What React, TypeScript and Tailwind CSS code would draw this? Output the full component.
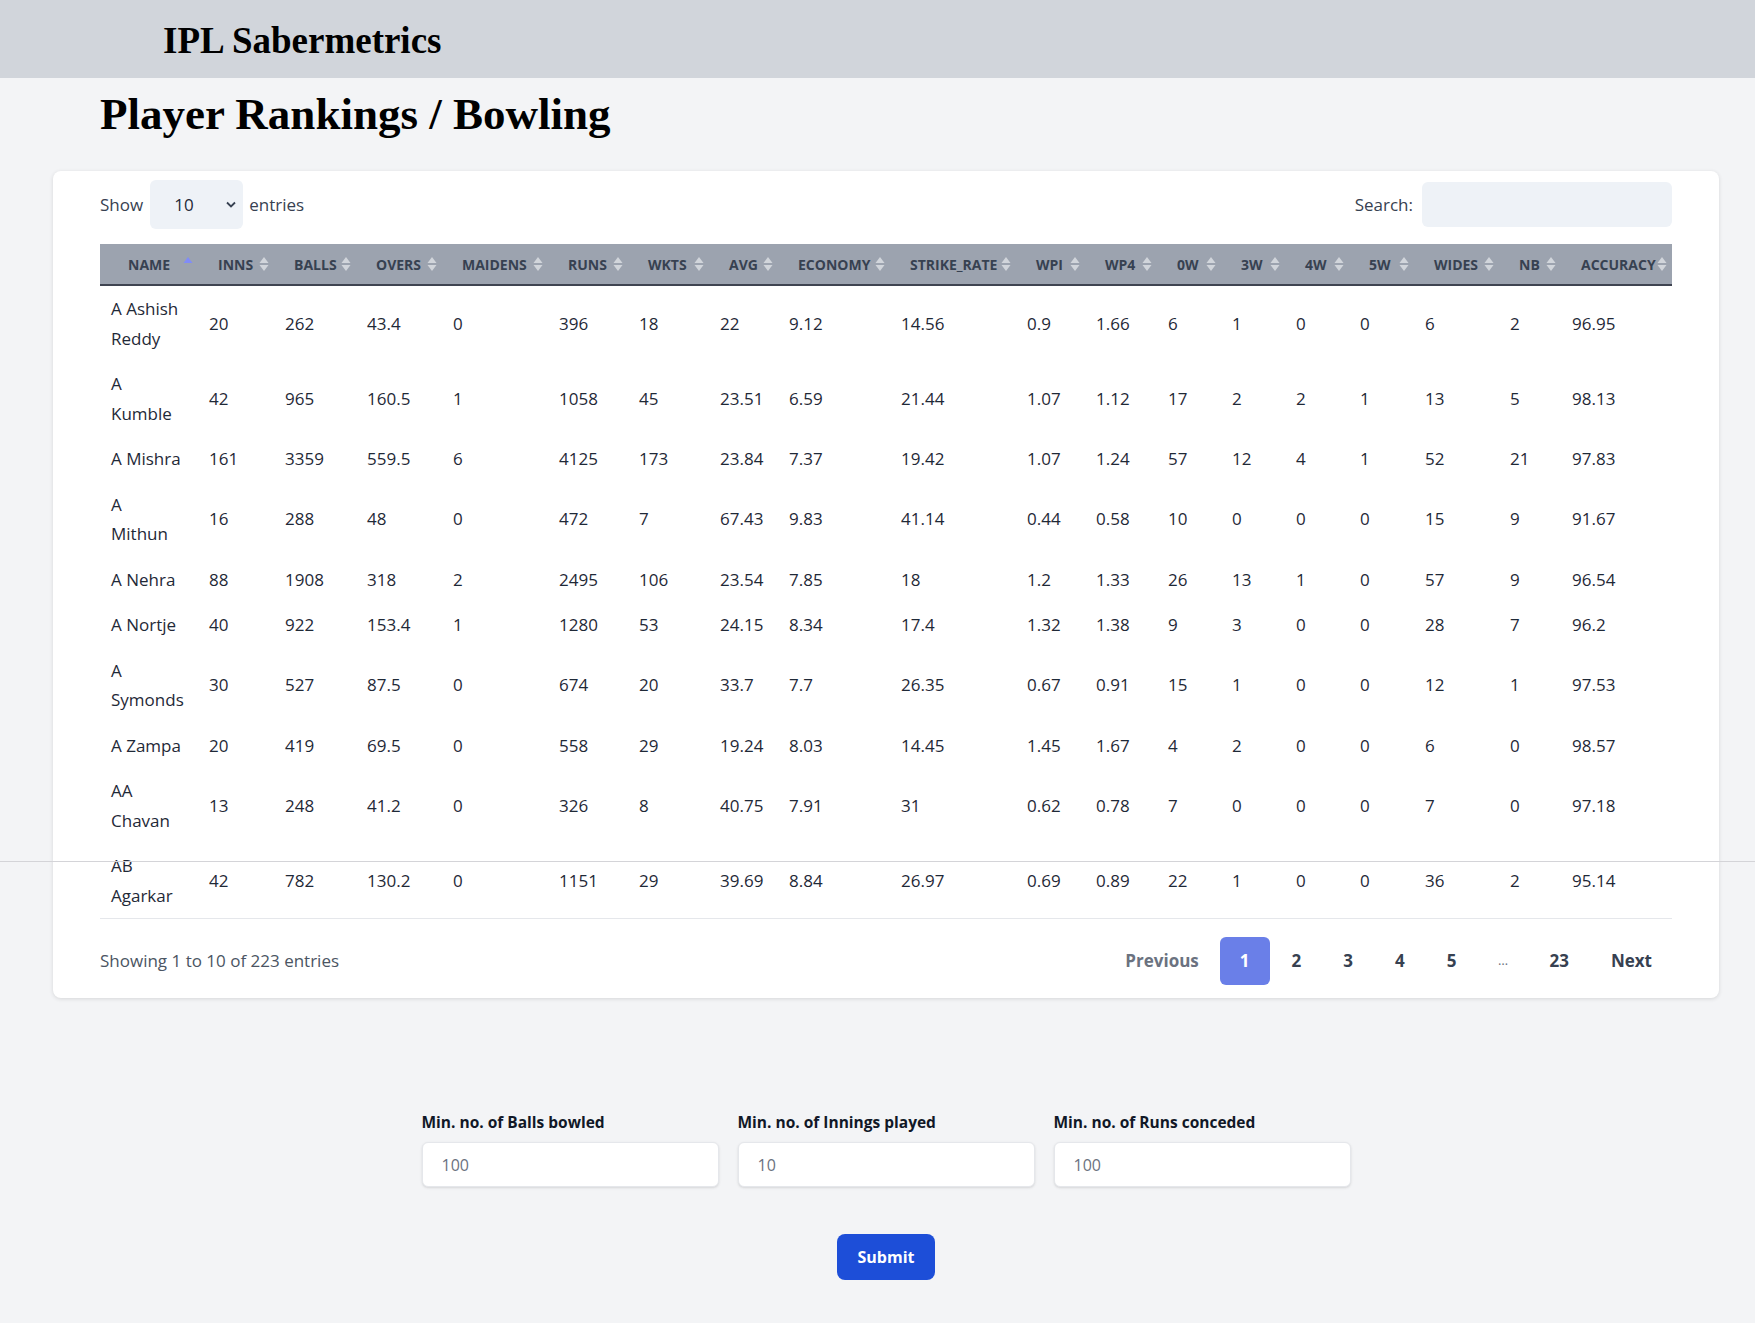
import React from 'react';

type Row = { name: string[]; stats: (string | number)[] };

const columns = [
  'NAME', 'INNS', 'BALLS', 'OVERS', 'MAIDENS', 'RUNS', 'WKTS', 'AVG', 'ECONOMY', 'STRIKE_RATE',
  'WPI', 'WP4', '0W', '3W', '4W', '5W', 'WIDES', 'NB', 'ACCURACY',
];

const colWidths = [
  'w-[98px]', 'w-[76px]', 'w-[82px]', 'w-[86px]', 'w-[106px]', 'w-[80px]', 'w-[81px]', 'w-[69px]',
  'w-[112px]', 'w-[126px]', 'w-[69px]', 'w-[72px]', 'w-[64px]', 'w-[64px]', 'w-[64px]', 'w-[65px]',
  'w-[85px]', 'w-[62px]', 'w-[111px]',
];

const rows: Row[] = [
  { name: ['A Ashish', 'Reddy'], stats: [20, 262, 43.4, 0, 396, 18, 22, 9.12, 14.56, 0.9, 1.66, 6, 1, 0, 0, 6, 2, 96.95] },
  { name: ['A', 'Kumble'], stats: [42, 965, 160.5, 1, 1058, 45, 23.51, 6.59, 21.44, 1.07, 1.12, 17, 2, 2, 1, 13, 5, 98.13] },
  { name: ['A Mishra'], stats: [161, 3359, 559.5, 6, 4125, 173, 23.84, 7.37, 19.42, 1.07, 1.24, 57, 12, 4, 1, 52, 21, 97.83] },
  { name: ['A', 'Mithun'], stats: [16, 288, 48, 0, 472, 7, 67.43, 9.83, 41.14, 0.44, 0.58, 10, 0, 0, 0, 15, 9, 91.67] },
  { name: ['A Nehra'], stats: [88, 1908, 318, 2, 2495, 106, 23.54, 7.85, 18, 1.2, 1.33, 26, 13, 1, 0, 57, 9, 96.54] },
  { name: ['A Nortje'], stats: [40, 922, 153.4, 1, 1280, 53, 24.15, 8.34, 17.4, 1.32, 1.38, 9, 3, 0, 0, 28, 7, 96.2] },
  { name: ['A', 'Symonds'], stats: [30, 527, 87.5, 0, 674, 20, 33.7, 7.7, 26.35, 0.67, 0.91, 15, 1, 0, 0, 12, 1, 97.53] },
  { name: ['A Zampa'], stats: [20, 419, 69.5, 0, 558, 29, 19.24, 8.03, 14.45, 1.45, 1.67, 4, 2, 0, 0, 6, 0, 98.57] },
  { name: ['AA', 'Chavan'], stats: [13, 248, 41.2, 0, 326, 8, 40.75, 7.91, 31, 0.62, 0.78, 7, 0, 0, 0, 7, 0, 97.18] },
  { name: ['AB', 'Agarkar'], stats: [42, 782, 130.2, 0, 1151, 29, 39.69, 8.84, 26.97, 0.69, 0.89, 22, 1, 0, 0, 36, 2, 95.14] },
];

function SortIcon({ active }: { active?: boolean }) {
  return (
    <svg width="10" height="15" viewBox="0 0 10 15" className="absolute right-[5px] top-1/2 -translate-y-1/2">
      <path d="M5 0.5 L9.5 6.5 L0.5 6.5 Z" fill={active ? '#818cf8' : '#d1d5db'} />
      {!active && <path d="M0.5 8.5 L9.5 8.5 L5 14.5 Z" fill="#d1d5db" />}
    </svg>
  );
}

function FilterField({ label, placeholder }: { label: string; placeholder: string }) {
  return (
    <div className="flex flex-col w-[297px]">
      <label className="mb-[10px] text-[15.5px] font-bold leading-[20px] text-[#111827]">{label}</label>
      <input
        placeholder={placeholder}
        className="h-[45px] w-full rounded-md border border-[#e5e7eb] bg-white pl-[19px] text-[16px] text-[#111827] placeholder:text-[#6b7280] shadow-sm outline-none"
      />
    </div>
  );
}

export default function App() {
  const pages = ['1', '2', '3', '4', '5', '…', '23'];

  return (
    <div className="relative min-h-screen bg-[#f3f4f6] pb-[45px] text-[#1f2937]" style={{ fontFamily: '"Open Sans", "Noto Sans", sans-serif' }}>
      {/* Top bar */}
      <header className="flex h-[78px] items-center bg-[#d1d5db] pl-[163px] pt-[3px]">
        <h1 className="text-[37px] font-bold leading-none text-black" style={{ fontFamily: '"Liberation Serif", serif' }}>
          IPL Sabermetrics
        </h1>
      </header>

      <h2 className="mt-[14px] pl-[100px] text-[45px] font-bold leading-none text-black" style={{ fontFamily: '"Liberation Serif", serif' }}>
        Player Rankings / Bowling
      </h2>

      {/* Table card */}
      <div className="ml-[53px] mt-[34px] w-[1666px] rounded-lg bg-white px-[47px] pt-[9px] pb-[13px] shadow-[0_1px_4px_rgba(0,0,0,0.12)]">
        <div className="flex items-center justify-between">
          <div className="flex items-center text-[17px] text-[#374151]">
            <span>Show</span>
            <div className="relative ml-[7px] mr-[6px] flex h-[49px] w-[93px] items-center rounded-md bg-[#eef2f7] pl-[24px]">
              <span className="text-[#1f2937]">10</span>
              <svg width="10" height="7" viewBox="0 0 10 7" className="absolute right-[7px] top-[21px]">
                <path d="M1 1.5 L5 5.5 L9 1.5" fill="none" stroke="#374151" strokeWidth="1.8" />
              </svg>
            </div>
            <span>entries</span>
          </div>
          <div className="flex items-center text-[17px] text-[#374151]">
            <span className="mr-[9px]">Search:</span>
            <input className="h-[45px] w-[250px] rounded-md bg-[#eef2f7] outline-none" />
          </div>
        </div>

        <table className="mt-[15px] w-full table-fixed border-collapse">
          <colgroup>
            {colWidths.map((w, i) => (
              <col key={i} className={w} />
            ))}
          </colgroup>
          <thead>
            <tr className="h-[41px] border-b-2 border-[#3f4451] bg-[#9ca3af]">
              {columns.map((c, i) => (
                <th
                  key={c}
                  className={`relative text-left text-[14px] font-bold text-[#374151] ${i === 0 ? 'pl-[28px]' : 'pl-[20px]'}`}
                >
                  {c}
                  <SortIcon active={i === 0} />
                </th>
              ))}
            </tr>
          </thead>
          <tbody>
            {rows.map((r, ri) => (
              <tr key={ri} className={ri === rows.length - 1 ? 'border-b border-[#e5e7eb]' : ''}>
                <td className="py-[8px] pl-[11px] align-middle text-[17px] leading-[29.5px]">
                  {r.name.map((n, ni) => (
                    <div key={ni}>{n}</div>
                  ))}
                </td>
                {r.stats.map((s, si) => (
                  <td key={si} className="py-[8px] pl-[11px] align-middle text-[17px] leading-[29.5px]">
                    {s}
                  </td>
                ))}
              </tr>
            ))}
          </tbody>
        </table>

        <div className="mt-[18px] flex items-center justify-between">
          <span className="text-[17px] text-[#4b5563]">Showing 1 to 10 of 223 entries</span>
          <div className="flex items-center gap-[2px] text-[17px] font-bold">
            <span className="flex h-[48px] items-center px-[19px] text-[#6b7280]">Previous</span>
            {pages.map((p) => (
              <span
                key={p}
                className={
                  p === '1'
                    ? 'flex h-[48px] min-w-[49px] items-center justify-center rounded-md bg-[#6a7fe8] px-[20px] text-white'
                    : p === '…'
                    ? 'flex h-[48px] min-w-[49px] items-center justify-center px-[18px] text-[13px] font-normal text-[#6b7280]'
                    : 'flex h-[48px] min-w-[49px] items-center justify-center px-[20px] text-[#374151]'
                }
              >
                {p}
              </span>
            ))}
            <span className="flex h-[48px] items-center px-[20px] text-[#374151]">Next</span>
          </div>
        </div>
      </div>

      {/* Filters */}
      <form className="mt-[114px] flex flex-col items-center pl-[17px]" onSubmit={(e) => e.preventDefault()}>
        <div className="flex gap-[19px]">
          <FilterField label="Min. no. of Balls bowled" placeholder="100" />
          <FilterField label="Min. no. of Innings played" placeholder="10" />
          <FilterField label="Min. no. of Runs conceded" placeholder="100" />
        </div>
        <button
          type="submit"
          className="mt-[47px] h-[46px] w-[98px] rounded-lg bg-[#1d4ed8] text-[16px] font-bold text-white"
        >
          Submit
        </button>
      </form>

      {/* screenshot seam */}
      <div className="pointer-events-none absolute left-0 top-[861px] h-px w-full bg-[#d4d4d8]" />
    </div>
  );
}
